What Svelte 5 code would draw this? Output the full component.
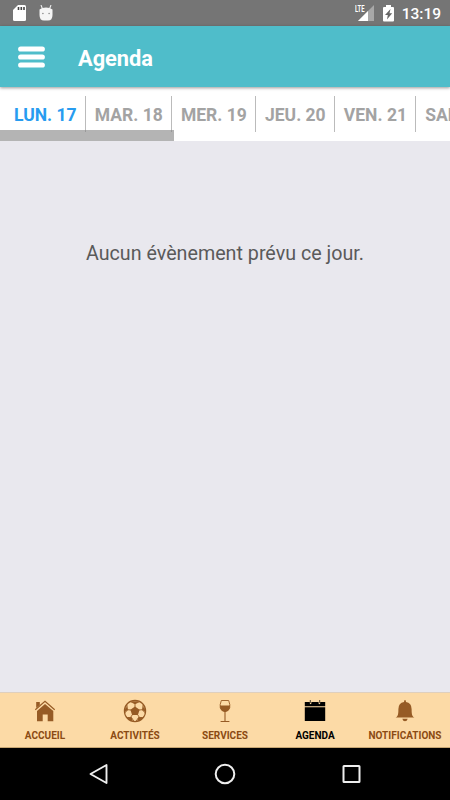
<script>
	var days = ['LUN. 17', 'MAR. 18', 'MER. 19', 'JEU. 20', 'VEN. 21', 'SAM. 22'];
	var tabs = [
		{ id: 'home', label: 'ACCUEIL' },
		{ id: 'activities', label: 'ACTIVITÉS' },
		{ id: 'services', label: 'SERVICES' },
		{ id: 'agenda', label: 'AGENDA' },
		{ id: 'notifications', label: 'NOTIFICATIONS' }
	];

	var day = $state(0);
	var tab = $state('agenda');
</script>

<div class="screen">
	<div class="status">
		<svg class="sd" width="14" height="17" viewBox="0 0 14 17">
			<path d="M5 0h6.500Q13 0 13 1.500v13Q13 16 11.500 16h-10Q0 16 0 14.500V5z" fill="#fff" />
			<path d="M5.500 2v3M8.300 2v3M11 2v3" stroke="#444" stroke-width="1.600" />
		</svg>
		<svg class="droid" width="14" height="17" viewBox="0 0 14 17">
			<path d="M2 0l1.500 4M12 0l-1.500 4" stroke="#eee" stroke-width="1.100" />
			<path d="M.5 4.500Q3 2.500 7 2.500t6.500 2v5.500q0 5.500-4.500 5.500H5Q.5 15.500 .5 10z" fill="#f5f5f5" />
			<circle cx="3.900" cy="8.500" r=".8" fill="#888" />
			<circle cx="10.100" cy="8.500" r=".8" fill="#888" />
		</svg>
		<div class="signal">
			<span class="lte">LTE</span>
			<svg width="17" height="17" viewBox="0 0 17 17">
				<path d="M17 0v16H1z" fill="#a8a8a8" />
				<path d="M11 6v10H1z" fill="#fff" />
			</svg>
		</div>
		<svg class="battery" width="11" height="17" viewBox="0 0 11 17">
			<path d="M3 0h5v2h2q1 0 1 1v12.500q0 1-1 1H1q-1 0-1-1V3q0-1 1-1h2z" fill="#fff" />
			<path d="M7.500 4L2 10h2.800l-.8 4.500L9.200 8.200H6.500z" fill="#666" />
		</svg>
		<span class="time">13:19</span>
	</div>

	<header>
		<button class="menu" aria-label="Menu">
			<svg width="27" height="22" viewBox="0 0 27 22">
				<path d="M2.700 3h21.600M2.700 11h21.600M2.700 19h21.600" stroke="#fff" stroke-width="5.200" stroke-linecap="round" />
			</svg>
		</button>
		<h1>Agenda</h1>
	</header>

	<div class="days">
		{#each days as label, i}
			<button class:active={day === i} onclick={() => (day = i)}>{label}</button>
		{/each}
		<div class="scrollbar"></div>
	</div>

	<main>
		<p>Aucun évènement prévu ce jour.</p>
	</main>

	<nav>
		{#each tabs as t}
			<button class:active={tab === t.id} onclick={() => (tab = t.id)}>
				<svg width="24" height="24" viewBox="0 0 24 24">
					{#if t.id === 'home'}
						<path d="M3.200 3h3.600v3L3.200 9zM12 5l8.300 7V22.200h-5.600v-6.700h-5v6.700H4V12z" fill="currentColor" />
						<path d="M2.300 10.800L12 2.300l9.700 8.500" fill="none" stroke="currentColor" stroke-width="1.200" />
					{:else if t.id === 'activities'}
						<circle cx="12" cy="12" r="10.600" fill="none" stroke="currentColor" stroke-width="1.200" />
						<path d="M12 7.400l4.600 3.400-1.700 5.300H9.100l-1.700-5.300zM7.500 2.200h9L12 5zM21 6.500l1.700 7-3.300-2.400zM3 6.500l-1.700 7 3.300-2.400zM18.900 20.200l-4.300 2 .6-3.700 4.700-.4zM5.100 20.200l4.300 2-.6-3.700-4.700-.4z" fill="currentColor" />
						<path d="M12 4.500v3.500M16 11l3.500-.3M14.500 15.500l2 3M9.500 15.500l-2 3M8 11l-3.500-.3M7 2.500l5 2.200 5-2.200M20.200 5.500l-.8 5.500 3 3M3.800 5.500l.8 5.500-3 3M13 22.500l2.500-4 4.500.3M11 22.500l-2.500-4-4.500.3" fill="none" stroke="currentColor" stroke-width=".9" />
					{:else if t.id === 'services'}
						<path d="M8.300 1.500h7.400q1.700 4.500 1 7.400-.9 3.300-4.700 3.600-3.800-.3-4.700-3.600-.7-2.900 1-7.400z" fill="none" stroke="currentColor" stroke-width=".9" />
						<path d="M7 6.500h10q.2 5.600-5 6.400-5.200-.8-5-6.400z" fill="currentColor" />
						<path d="M12 12v10M7.600 22.500h8.800" stroke="currentColor" stroke-width="1.100" />
					{:else if t.id === 'agenda'}
						<path d="M1.800 3h5v1.500q.8 1.400 1.600 0V3h7.200v1.500q.8 1.400 1.600 0V3h5v4.200H1.800zM1.800 8.300h20.400V22H1.800z" fill="currentColor" />
						<path d="M7.300 1v3M16.700 1v3" stroke="currentColor" stroke-width=".7" />
					{:else}
						<path d="M11 3q0-2 1-2t1 2q5.600 1 5.600 7 0 5.500 1 7 .7 1 1.800 1.600H2.600q1.100-.6 1.800-1.600 1-1.500 1-7 0-6 5.600-7zM9.300 19.700h5.400q-.7 2.500-2.700 2.500t-2.700-2.500z" fill="currentColor" />
					{/if}
				</svg>
				<span>{t.label}</span>
			</button>
		{/each}
	</nav>

	<div class="system">
		<svg width="20" height="22" viewBox="0 0 20 22">
			<path d="M1.500 11L17.500 2v18z" fill="none" stroke="#eee" stroke-width="1.900" stroke-linejoin="round" />
		</svg>
		<svg width="22" height="22" viewBox="0 0 22 22">
			<circle cx="11" cy="11" r="9.300" fill="none" stroke="#eee" stroke-width="2" />
		</svg>
		<svg width="20" height="20" viewBox="0 0 20 20">
			<rect x="2.500" y="2" width="16" height="16" rx=".5" fill="none" stroke="#eee" stroke-width="2" />
		</svg>
	</div>
</div>

<style>
	.screen {
		display: flex;
		flex-direction: column;
		width: 450px;
		height: 800px;
		overflow: hidden;
		background: #e9e8ee;
		font-family: Roboto, sans-serif;
	}

	button {
		border: 0;
		padding: 0;
		background: none;
		font-family: inherit;
	}

	svg {
		display: block;
		flex: none;
	}

	.status {
		display: flex;
		align-items: center;
		flex: none;
		height: 26px;
		padding: 0 9px 0 13px;
		box-sizing: border-box;
		background: #757575;
		color: #fff;
	}

	.droid {
		margin-left: 12px;
	}

	.signal {
		position: relative;
		margin-left: auto;
		margin-right: 9px;
	}

	.lte {
		position: absolute;
		left: -2px;
		top: 0;
		font-size: 9px;
		line-height: 9px;
		font-weight: 700;
		transform: scaleX(0.65);
		transform-origin: left;
	}

	.time {
		margin-left: 8px;
		padding-top: 1px;
		font-size: 15.5px;
		font-weight: 500;
	}

	header {
		display: flex;
		align-items: center;
		flex: none;
		height: 61px;
		padding-left: 18px;
		background: #4fbdca;
		box-shadow: 0 1px 3px rgba(0, 0, 0, 0.4);
		position: relative;
		z-index: 1;
	}

	h1 {
		margin: 3px 0 0 33px;
		font-size: 21.8px;
		font-weight: 700;
		color: #fff;
	}

	.days {
		display: flex;
		flex: none;
		position: relative;
		height: 54px;
		padding: 9px 0 0 5px;
		box-sizing: border-box;
		overflow: hidden;
		background: #fff;
	}

	.days button {
		flex: none;
		height: 36px;
		padding: 2px 8.2px 0 9px;
		border-right: 1px solid #bbb;
		font-size: 17.5px;
		font-weight: 700;
		color: #a3a3a3;
	}

	.days .active {
		color: #279cf0;
	}

	.scrollbar {
		position: absolute;
		left: 0;
		bottom: 0;
		width: 174px;
		height: 11px;
		background: rgba(130, 130, 130, 0.6);
	}

	main {
		flex: 1;
		padding-top: 101px;
	}

	p {
		margin: 0;
		text-align: center;
		font-size: 19.7px;
		line-height: 24px;
		color: #5a5a5a;
	}

	nav {
		display: flex;
		flex: none;
		height: 56px;
		box-sizing: border-box;
		border-top: 1px solid #dfcfbd;
		border-bottom: 1px solid #c7a672;
		background: #fcdaa6;
	}

	nav button {
		display: flex;
		flex-direction: column;
		align-items: center;
		width: 90px;
		padding-top: 6px;
		color: #965b25;
	}

	nav span {
		margin-top: 6px;
		font-size: 10px;
		line-height: 14px;
		font-weight: 700;
		color: #8b4b13;
	}

	nav .active,
	nav .active span {
		color: #000;
	}

	.system {
		display: flex;
		align-items: center;
		justify-content: space-between;
		flex: none;
		height: 52px;
		padding: 0 89px;
		box-sizing: border-box;
		background: #000;
	}
</style>
